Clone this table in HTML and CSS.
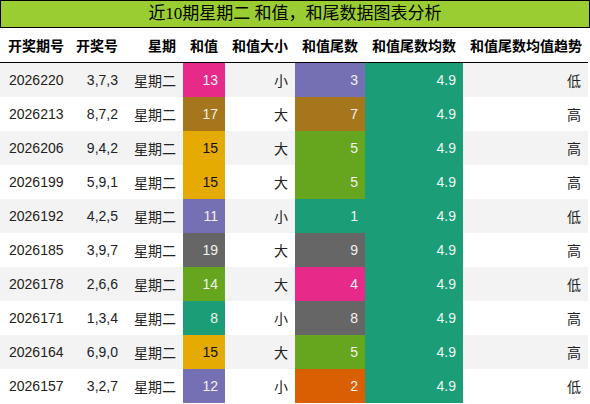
FILE: index.html
```html
<!DOCTYPE html>
<html lang="zh-CN">
<head>
  <meta charset="UTF-8">
  <meta name="viewport" content="width=device-width, initial-scale=1.0">
  <title>近10期星期二 和值，和尾数据图表分析</title>
  <link rel="stylesheet" href="styles.css">
</head>
<body>
  <div class="title">近10期星期二 和值，和尾数据图表分析</div>

  <table class="data-table">
    <colgroup>
      <col class="c-issue">
      <col class="c-nums">
      <col class="c-week">
      <col class="c-sum">
      <col class="c-size">
      <col class="c-tail">
      <col class="c-avg">
      <col class="c-trend">
    </colgroup>
    <thead>
      <tr>
        <th class="left">开奖期号</th>
        <th>开奖号</th>
        <th>星期</th>
        <th>和值</th>
        <th>和值大小</th>
        <th>和值尾数</th>
        <th>和值尾数均数</th>
        <th>和值尾数均值趋势</th>
      </tr>
    </thead>
    <tbody>
      <tr>
        <td class="left">2026220</td><td>3,7,3</td><td>星期二</td>
        <td class="pink">13</td><td>小</td><td class="purple">3</td>
        <td class="teal">4.9</td><td>低</td>
      </tr>
      <tr>
        <td class="left">2026213</td><td>8,7,2</td><td>星期二</td>
        <td class="brown">17</td><td>大</td><td class="brown">7</td>
        <td class="teal">4.9</td><td>高</td>
      </tr>
      <tr>
        <td class="left">2026206</td><td>9,4,2</td><td>星期二</td>
        <td class="yellow">15</td><td>大</td><td class="green">5</td>
        <td class="teal">4.9</td><td>高</td>
      </tr>
      <tr>
        <td class="left">2026199</td><td>5,9,1</td><td>星期二</td>
        <td class="yellow">15</td><td>大</td><td class="green">5</td>
        <td class="teal">4.9</td><td>高</td>
      </tr>
      <tr>
        <td class="left">2026192</td><td>4,2,5</td><td>星期二</td>
        <td class="purple">11</td><td>小</td><td class="teal">1</td>
        <td class="teal">4.9</td><td>低</td>
      </tr>
      <tr>
        <td class="left">2026185</td><td>3,9,7</td><td>星期二</td>
        <td class="gray">19</td><td>大</td><td class="gray">9</td>
        <td class="teal">4.9</td><td>高</td>
      </tr>
      <tr>
        <td class="left">2026178</td><td>2,6,6</td><td>星期二</td>
        <td class="green">14</td><td>大</td><td class="pink">4</td>
        <td class="teal">4.9</td><td>低</td>
      </tr>
      <tr>
        <td class="left">2026171</td><td>1,3,4</td><td>星期二</td>
        <td class="teal">8</td><td>小</td><td class="gray">8</td>
        <td class="teal">4.9</td><td>高</td>
      </tr>
      <tr>
        <td class="left">2026164</td><td>6,9,0</td><td>星期二</td>
        <td class="yellow">15</td><td>大</td><td class="green">5</td>
        <td class="teal">4.9</td><td>高</td>
      </tr>
      <tr>
        <td class="left">2026157</td><td>3,2,7</td><td>星期二</td>
        <td class="purple">12</td><td>小</td><td class="orange">2</td>
        <td class="teal">4.9</td><td>低</td>
      </tr>
    </tbody>
  </table>
</body>
</html>
```

FILE: styles.css
```css
body {
  margin: 0;
  background-color: #fff;
  font-family: "Liberation Sans", Arial, "Noto Sans CJK SC", sans-serif;
  color: #222;
}
.title {
  box-sizing: border-box;
  width: 590px;
  height: 28px;
  line-height: 26px;
  border: 1px solid #000;
  background-color: #9acd32;
  text-align: center;
  font-family: "Liberation Serif", "Noto Sans CJK SC", serif;
  font-size: 17px;
  color: #000;
}
.data-table {
  width: 588px;
  border-collapse: collapse;
  table-layout: fixed;
  font-size: 14px;
}
.c-issue { width: 68px; }
.c-nums { width: 57px; }
.c-week { width: 58px; }
.c-sum { width: 42px; }
.c-size { width: 70px; }
.c-tail { width: 70px; }
.c-avg { width: 98px; }
.c-trend { width: 125px; }
th, td {
  padding: 0 7px;
  text-align: right;
  white-space: nowrap;
}
th {
  height: 34px;
  font-weight: bold;
  color: #000;
  border-bottom: 1px solid #000;
}
td {
  height: 34px;
}
th.left {
  text-align: left;
  padding-left: 8px;
}
td.left {
  text-align: left;
  padding-left: 9px;
}
tbody tr:nth-child(odd) {
  background-color: #f3f3f3;
}
.pink { background-color: #e7298a; color: #f2f2f2; }
.brown { background-color: #a6761d; color: #f2f2f2; }
.yellow { background-color: #e6ab02; color: #111; }
.purple { background-color: #7570b3; color: #f2f2f2; }
.gray { background-color: #666666; color: #f2f2f2; }
.green { background-color: #66a61e; color: #f2f2f2; }
.teal { background-color: #1b9e77; color: #f2f2f2; }
.orange { background-color: #d95f02; color: #f2f2f2; }
```
